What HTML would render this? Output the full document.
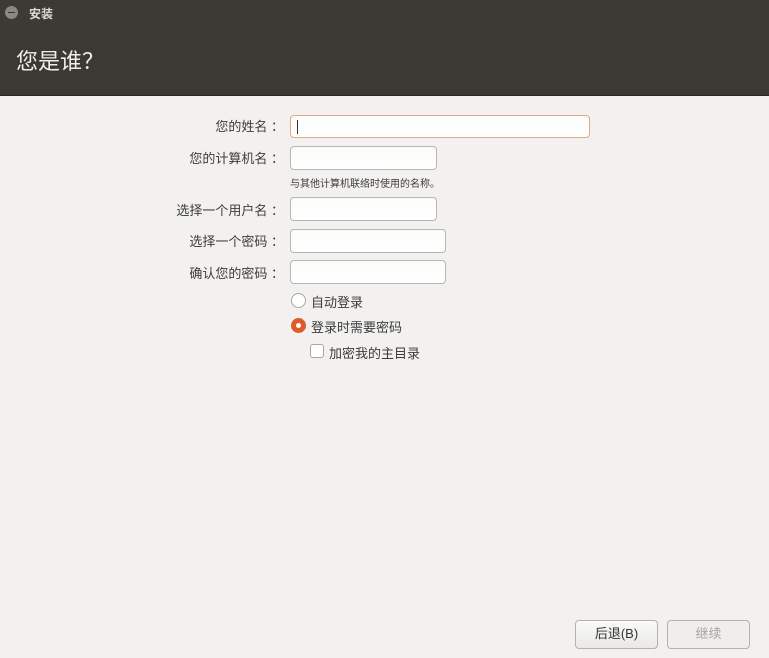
<!DOCTYPE html><html><head><meta charset="utf-8"><style>
body{margin:0;width:769px;height:658px;background:#f2f1ef;font-family:"Liberation Sans","Noto Sans CJK SC",sans-serif;position:relative;overflow:hidden}
.a{position:absolute}
.tb{left:0;top:0;width:769px;height:26px;background:#3d3a36}
.hd{left:0;top:26px;width:769px;height:69px;background:#3c3935;border-bottom:1px solid #2a2826}
.lbl{font-size:13px;color:#3c3c3c;text-align:right;width:200px;left:84px}
.in{background:linear-gradient(#fbfbfa,#ffffff);border:1px solid #b9b6b1;border-radius:4px;box-sizing:border-box}
.t{font-size:13px;color:#3c3c3c}
.btn{border:1px solid #b5b2ad;border-radius:4px;background:linear-gradient(#fafaf9,#e9e8e6);box-sizing:border-box;font-size:13px;text-align:center;line-height:26px}
</style></head><body>
<div class="a tb"></div>
<div class="a" style="left:5px;top:6px;width:13px;height:13px;border-radius:50%;background:#8a8782"><div style="margin:6px 3px;width:7px;height:1px;background:#333"></div></div>
<div class="a" style="left:29px;top:5px;font-size:12px;font-weight:bold;color:#dfdbd2">安装</div>
<div class="a hd"></div>
<div class="a" style="left:16px;top:44px;font-size:22px;color:#eeeeec">您是谁？</div>
<div class="a lbl" style="top:116px">您的姓名 ：</div>
<div class="a in" style="left:290px;top:115px;width:300px;height:23px;border-color:#e0a98b"><div style="margin:4px 0 0 6px;width:1px;height:14px;background:#333"></div></div>
<div class="a lbl" style="top:148px">您的计算机名 ：</div>
<div class="a in" style="left:290px;top:146px;width:147px;height:24px"></div>
<div class="a" style="left:290px;top:175px;font-size:10px;color:#3c3c3c">与其他计算机联络时使用的名称。</div>
<div class="a lbl" style="top:200px">选择一个用户名 ：</div>
<div class="a in" style="left:290px;top:197px;width:147px;height:24px"></div>
<div class="a lbl" style="top:231px">选择一个密码 ：</div>
<div class="a in" style="left:290px;top:229px;width:156px;height:24px"></div>
<div class="a lbl" style="top:263px">确认您的密码 ：</div>
<div class="a in" style="left:290px;top:260px;width:156px;height:24px"></div>
<div class="a" style="left:291px;top:293px;width:13px;height:13px;border:1px solid #aaa6a0;border-radius:50%;background:#fff"></div>
<div class="a t" style="left:311px;top:292px">自动登录</div>
<div class="a" style="left:291px;top:318px;width:15px;height:15px;border-radius:50%;background:#e05a2b"><div style="margin:5px;width:5px;height:5px;border-radius:50%;background:#fff"></div></div>
<div class="a t" style="left:311px;top:317px">登录时需要密码</div>
<div class="a" style="left:310px;top:344px;width:12px;height:12px;border:1px solid #aaa6a0;border-radius:3px;background:#fff"></div>
<div class="a t" style="left:329px;top:343px">加密我的主目录</div>
<div class="a btn" style="left:575px;top:620px;width:83px;height:29px;color:#333">后退(B)</div>
<div class="a btn" style="left:667px;top:620px;width:83px;height:29px;color:#a8a6a2;background:#efeeec">继续</div>
</body></html>
